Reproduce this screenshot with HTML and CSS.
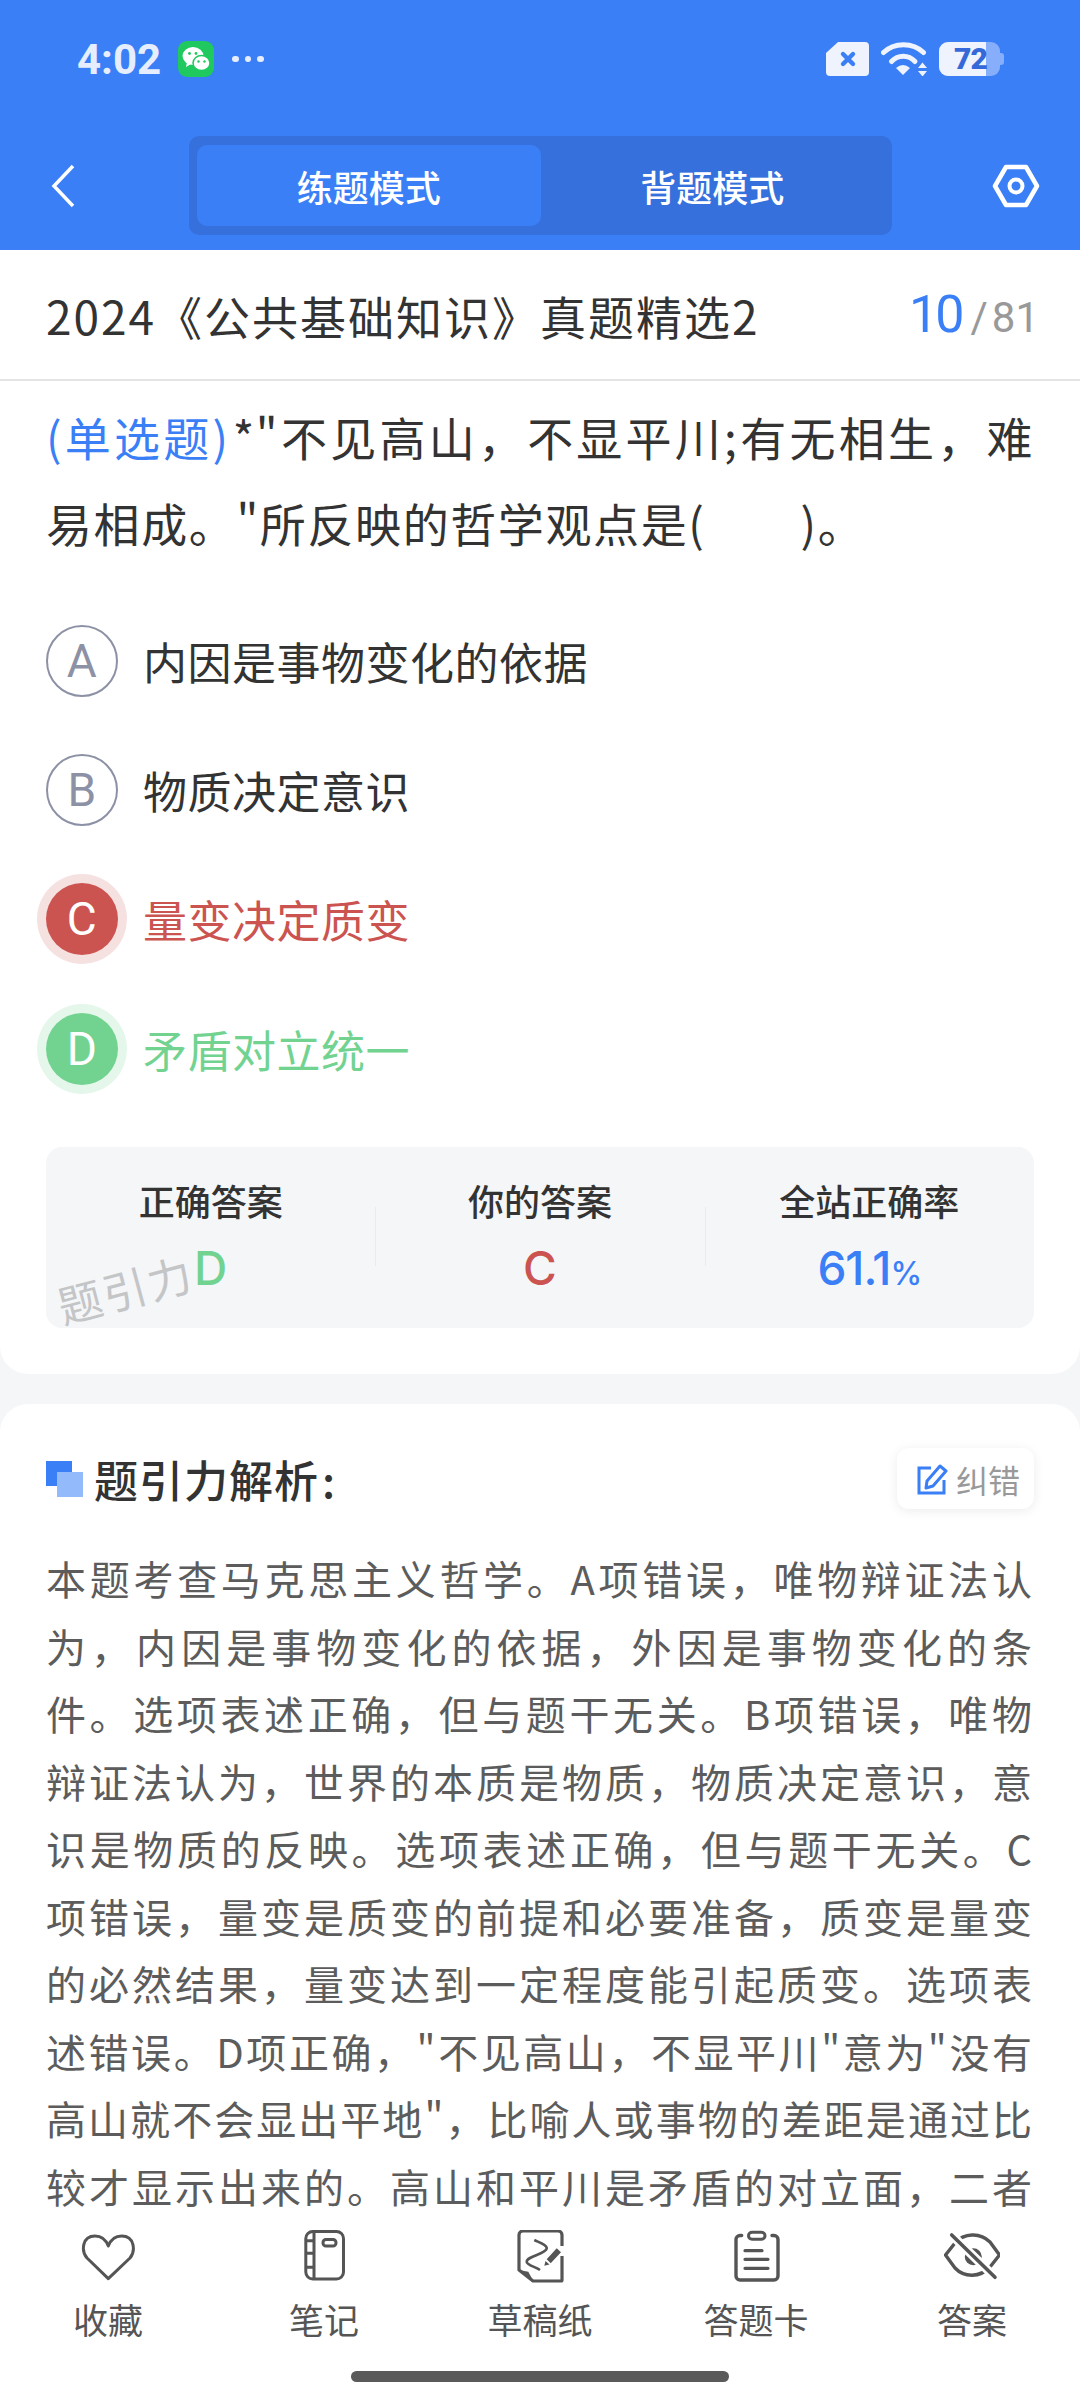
FILE: index.html
```html
<!DOCTYPE html>
<html lang="zh-CN">
<head>
  <meta charset="UTF-8" />
  <title>题引力</title>
  <link rel="stylesheet" href="styles.css">
</head>
<body>
  <div class="phone">
    <header class="top">
      <div class="status">
        <div class="status-left">
          <span class="clock">4:02</span>
          <span class="wechat">
            <svg viewBox="0 0 36 36" width="36" height="36">
              <ellipse cx="15" cy="15" rx="10.500" ry="9" fill="#fff"/>
              <path d="M9 21l-1 5 5-3z" fill="#fff"/>
              <ellipse cx="23.500" cy="22" rx="8.500" ry="7.500" fill="#fff" stroke="#1fc95f" stroke-width="1.500"/>
              <circle cx="11.500" cy="12.500" r="1.400" fill="#1fc95f"/>
              <circle cx="18" cy="12.500" r="1.400" fill="#1fc95f"/>
              <circle cx="20.500" cy="20.500" r="1.200" fill="#1fc95f"/>
              <circle cx="26.500" cy="20.500" r="1.200" fill="#1fc95f"/>
            </svg>
          </span>
          <span class="dots"><i></i><i></i><i></i></span>
        </div>
        <div class="status-right">
          <svg class="sim" viewBox="0 0 43 34" width="43" height="34">
            <path d="M12 0h27a4 4 0 0 1 4 4v26a4 4 0 0 1-4 4H4a4 4 0 0 1-4-4V11z" fill="#eef3fe"/>
            <path d="M17 12l10 10M27 12L17 22" stroke="#3b7ff6" stroke-width="4.400" stroke-linecap="round"/>
          </svg>
          <svg class="wifi" viewBox="0 0 46 34" width="46" height="34">
            <path d="M2.500 10.500C13 0 32 0 42.500 10.500" fill="none" stroke="#eef3fe" stroke-width="5" stroke-linecap="round"/>
            <path d="M10.500 19.500C17 12.500 27.500 12.500 34 19.500" fill="none" stroke="#eef3fe" stroke-width="5" stroke-linecap="round"/>
            <path d="M15 26q7-6 14 0l-7 7z" fill="#eef3fe"/>
            <path d="M41.500 20.500l4.500 5.500h-9zM41.500 34.500L37 29h9z" fill="#eef3fe"/>
          </svg>
          <span class="battery">
            <span class="battery-fill"></span>
            <span class="battery-num">72</span>
            <span class="battery-cap"></span>
          </span>
        </div>
      </div>
      <nav class="navbar">
        <svg class="back" viewBox="0 0 26 44" width="26" height="44">
          <path d="M23 2L4 22l19 20" fill="none" stroke="#fff" stroke-width="3.500"/>
        </svg>
        <div class="mode-tabs">
          <div class="mode-tab active">练题模式</div>
          <div class="mode-tab">背题模式</div>
        </div>
        <svg class="setting" viewBox="0 0 48 44" width="48" height="44">
          <path d="M14 3h20l11 19-11 19H14L3 22z" fill="none" stroke="#fff" stroke-width="4.500" stroke-linejoin="round"/>
          <circle cx="24" cy="22" r="6.500" fill="none" stroke="#fff" stroke-width="4"/>
        </svg>
      </nav>
    </header>

    <div class="paper-title">
      <span class="paper-name">2024《公共基础知识》真题精选2</span>
      <span class="paper-count"><b>10</b><em>/</em>81</span>
    </div>

    <section class="card question">
      <p class="stem"><span class="qtype">(单选题)</span>*"不见高山，不显平川;有无相生，难易相成。"所反映的哲学观点是(&emsp;&emsp;)。</p>

      <div class="option"><span class="letter">A</span>内因是事物变化的依据</div>
      <div class="option"><span class="letter">B</span>物质决定意识</div>
      <div class="option wrong"><span class="letter">C</span>量变决定质变</div>
      <div class="option right"><span class="letter">D</span>矛盾对立统一</div>

      <div class="result">
        <div class="result-col">
          <div class="result-label">正确答案</div>
          <div class="result-val green">D</div>
        </div>
        <div class="result-col">
          <div class="result-label">你的答案</div>
          <div class="result-val red">C</div>
        </div>
        <div class="result-col">
          <div class="result-label">全站正确率</div>
          <div class="result-val blue">61.1<small>%</small></div>
        </div>
        <span class="watermark">题引力</span>
      </div>
    </section>

    <section class="card analysis">
      <div class="analysis-head">
        <span class="squares"><i></i><i></i></span>
        <h2>题引力解析 :</h2>
        <span class="report">
          <svg viewBox="0 0 32 32" width="32" height="32">
            <path d="M15 5H3v25h25V17" fill="none" stroke="#3b7ff6" stroke-width="3"/>
            <path d="M24 3l6 5-13 15-7 2 1-7z" fill="none" stroke="#3b7ff6" stroke-width="3" stroke-linejoin="round"/>
          </svg>
          纠错
        </span>
      </div>
      <p class="analysis-text">本题考查马克思主义哲学。A项错误，唯物辩证法认为，内因是事物变化的依据，外因是事物变化的条件。选项表述正确，但与题干无关。B项错误，唯物辩证法认为，世界的本质是物质，物质决定意识，意识是物质的反映。选项表述正确，但与题干无关。C项错误，量变是质变的前提和必要准备，质变是量变的必然结果，量变达到一定程度能引起质变。选项表述错误。D项正确，"不见高山，不显平川"意为"没有高山就不会显出平地"，比喻人或事物的差距是通过比较才显示出来的。高山和平川是矛盾的对立面，二者</p>
    </section>

    <footer class="bottom">
      <div class="tools">
        <div class="tool">
          <svg viewBox="0 0 56 56" width="56" height="56">
            <path d="M28.300 48.700L7 28C1 21 2 6 15 6c6 0 11 4 13.300 10 2.300-6 7.300-10 13.400-10 13 0 14 15 8.300 22z" fill="none" stroke="#555" stroke-width="3" stroke-linejoin="round"/>
          </svg>
          <span>收藏</span>
        </div>
        <div class="tool">
          <svg viewBox="0 0 56 56" width="56" height="56">
            <rect x="9.800" y="1.500" width="37.700" height="47.500" rx="7" fill="none" stroke="#555" stroke-width="3"/>
            <path d="M18 1.500v47.500M9.800 10.700H18M9.800 23.300H18M9.800 37.300H18" fill="none" stroke="#555" stroke-width="3"/>
            <rect x="27" y="9.500" width="13" height="6.500" rx="3" fill="none" stroke="#555" stroke-width="3"/>
          </svg>
          <span>笔记</span>
        </div>
        <div class="tool">
          <svg viewBox="0 0 56 56" width="56" height="56">
            <path d="M50 26V50a1 1 0 0 1-1 1H21L7 40V5a4 4 0 0 1 4-4h35a4 4 0 0 1 4 4v11" fill="none" stroke="#555" stroke-width="3.200" stroke-linejoin="round"/>
            <path d="M7 40l9.300 1.700L21.300 51z" fill="#555"/>
            <path d="M22.300 10c5 2.500 13 5 12.400 8.500C34 24 15 26 14.700 31.700 14.500 35 24 37 28 40" fill="none" stroke="#555" stroke-width="2.600"/>
            <path d="M34.700 29.300l10-11 4.300 4-10.300 11zM33.500 31l4 3.500-5.200 1.200z" fill="#555"/>
          </svg>
          <span>草稿纸</span>
        </div>
        <div class="tool">
          <svg viewBox="0 0 56 56" width="56" height="56">
            <path d="M13.700 5.500H12a4 4 0 0 0-4 4V46a4 4 0 0 0 4 4H46a4 4 0 0 0 4-4V9.500a4 4 0 0 0-4-4h-2" fill="none" stroke="#555" stroke-width="3.400" stroke-linecap="round"/>
            <rect x="20.500" y="2.200" width="16.500" height="7" rx="3.500" fill="none" stroke="#555" stroke-width="3"/>
            <path d="M17 20.700h17M17 29.300h23M17 38.300h23" stroke="#555" stroke-width="3.200" stroke-linecap="round"/>
          </svg>
          <span>答题卡</span>
        </div>
        <div class="tool">
          <svg viewBox="0 0 56 56" width="56" height="56">
            <path d="M1.500 25L11 13C20 3 36 2 46 12L55.500 25 46 37C36 48 20 47.500 11 38z" fill="none" stroke="#555" stroke-width="3.400" stroke-linejoin="round"/>
            <circle cx="29.300" cy="26.700" r="8.500" fill="#555"/>
            <path d="M7.700 5L51 47.300" stroke="#fff" stroke-width="9"/>
            <path d="M7.700 5L51 47.300" stroke="#555" stroke-width="3.600" stroke-linecap="round"/>
          </svg>
          <span>答案</span>
        </div>
      </div>
      <div class="home-bar"></div>
    </footer>
  </div>
</body>
</html>
```

FILE: styles.css
```css
html, body {
  margin: 0;
  padding: 0;
  background-color: #f5f6f8;
  font-family: "Noto Sans CJK SC", "Noto Sans", sans-serif;
  color: #333;
}

.phone {
  position: relative;
  width: 1080px;
  height: 2400px;
  overflow: hidden;
  background-color: #f5f6f8;
}

.top {
  height: 250px;
  background-color: #3b7ff6;
}

.status {
  height: 118px;
  padding: 0 76px 0 77px;
  display: flex;
  justify-content: space-between;
  align-items: center;
  box-sizing: border-box;
}

.status-left {
  display: flex;
  align-items: center;
}

.clock {
  font-family: Roboto, sans-serif;
  font-size: 42px;
  font-weight: 700;
  color: #e6eefd;
}

.wechat {
  width: 36px;
  height: 36px;
  margin-left: 17px;
  border-radius: 9px;
  background-color: #1fc95f;
  display: flex;
}

.dots {
  display: flex;
  gap: 6px;
  margin-left: 18px;
}

.dots i {
  width: 6.500px;
  height: 6.500px;
  border-radius: 50%;
  background-color: #e6eefd;
}

.status-right {
  display: flex;
  align-items: center;
  gap: 12px;
}

.battery {
  position: relative;
  display: block;
  width: 61px;
  height: 34px;
  margin-right: 4px;
  border-radius: 9px;
  background-color: #86aefa;
}

.battery-fill {
  position: absolute;
  left: 0;
  top: 0;
  bottom: 0;
  width: 47px;
  border-radius: 9px 0 0 9px;
  background-color: #eef3fe;
}

.battery-num {
  position: absolute;
  left: 15px;
  top: 0;
  font-family: Roboto, sans-serif;
  font-size: 30px;
  line-height: 34px;
  font-weight: 900;
  letter-spacing: -1px;
  color: #3568d8;
}

.battery-cap {
  position: absolute;
  right: -4px;
  top: 11px;
  width: 4px;
  height: 12px;
  border-radius: 0 3px 3px 0;
  background-color: #86aefa;
}

.navbar {
  height: 132px;
  padding: 3px 40px 0 50px;
  box-sizing: border-box;
  display: flex;
  align-items: center;
  justify-content: space-between;
}

.mode-tabs {
  width: 703px;
  height: 99px;
  margin-left: 13px;
  padding: 9px 8px;
  box-sizing: border-box;
  display: flex;
  background-color: #3670dc;
  border-radius: 10px;
}

.mode-tab {
  flex: 1;
  display: flex;
  align-items: center;
  justify-content: center;
  font-size: 36px;
  font-weight: 500;
  color: #fff;
  border-radius: 10px;
}

.mode-tab.active {
  background-color: #3b7ff6;
}

.paper-title {
  height: 131px;
  padding: 0 41px 0 46px;
  display: flex;
  align-items: center;
  justify-content: space-between;
  background-color: #fff;
  border-bottom: 2px solid #e4e4e4;
  box-sizing: border-box;
}

.paper-name {
  font-size: 46px;
  letter-spacing: 2px;
}

.paper-count {
  font-family: Roboto, sans-serif;
  font-size: 42px;
  color: #999;
}

.paper-count b {
  font-size: 52px;
  font-weight: 400;
  letter-spacing: -3px;
  color: #3b7ff6;
}

.paper-count em {
  font-style: normal;
  margin: 0 4px 0 9px;
}

.card {
  background-color: #fff;
  padding: 0 46px;
}

.question {
  height: 993px;
  border-radius: 0 0 28px 28px;
  padding-top: 13px;
  box-sizing: border-box;
}

.stem {
  margin: 0 0 31px;
  font-size: 46px;
  line-height: 85.500px;
  letter-spacing: 1.600px;
  text-align: justify;
}

.qtype {
  margin-right: 3px;
  color: #3b7ff6;
}

.option {
  height: 129.300px;
  display: flex;
  align-items: center;
  font-size: 44px;
  letter-spacing: 0.500px;
}

.letter {
  width: 72px;
  height: 72px;
  margin-right: 25px;
  flex: none;
  display: flex;
  align-items: center;
  justify-content: center;
  box-sizing: border-box;
  border: 2px solid #8d91a5;
  border-radius: 50%;
  font-family: Roboto, sans-serif;
  font-size: 46px;
  color: #8d91a5;
}

.wrong {
  color: #cb5450;
}

.wrong .letter {
  border: none;
  background-color: #cb5450;
  color: #fff;
  box-shadow: 0 0 0 9px #f6e1e1;
}

.right {
  color: #72d391;
}

.right .letter {
  border: none;
  background-color: #72d391;
  color: #fff;
  box-shadow: 0 0 0 9px #e5f7eb;
}

.result {
  position: relative;
  height: 181px;
  margin-top: 34px;
  display: flex;
  background-color: #f5f6f8;
  border-radius: 16px;
}

.result-col {
  flex: 1;
  padding-top: 28px;
  text-align: center;
  position: relative;
}

.result-col + .result-col:before {
  content: "";
  position: absolute;
  left: 0;
  top: 60px;
  height: 59px;
  width: 1px;
  background-color: #eaebee;
}

.result-label {
  font-size: 36px;
  font-weight: 500;
  line-height: 50px;
}

.result-val {
  margin-top: 15px;
  font-family: Inter, sans-serif;
  font-size: 46px;
  line-height: 56px;
  font-weight: 500;
}

.blue {
  letter-spacing: -1px;
  color: #3b7ff6;
}

.result-val small {
  font-size: 32px;
}

.green {
  color: #72d391;
}

.red {
  color: #cb5450;
}

.watermark {
  position: absolute;
  left: 10px;
  bottom: 8px;
  font-size: 44px;
  letter-spacing: 2px;
  color: #c4c5c7;
  transform: rotate(-15deg);
}

.analysis {
  height: 900px;
  margin-top: 30px;
  border-radius: 28px;
}

.analysis-head {
  height: 61px;
  padding-top: 44px;
  display: flex;
  align-items: center;
}

.squares {
  position: relative;
  width: 37px;
  height: 36px;
  margin-right: 11px;
  display: block;
}

.squares i {
  position: absolute;
  width: 26px;
  height: 25px;
}

.squares i:first-child {
  left: 0;
  top: 0;
  background-color: #3b7ff6;
}

.squares i:last-child {
  right: 0;
  bottom: 0;
  background-color: #93bbfb;
}

.analysis-head h2 {
  margin: 0;
  flex: 1;
  font-size: 44px;
  font-weight: 500;
  letter-spacing: 1px;
  word-spacing: -8px;
}

.report {
  height: 61px;
  width: 137px;
  padding-left: 5px;
  box-sizing: border-box;
  display: flex;
  align-items: center;
  justify-content: center;
  gap: 8px;
  font-size: 32px;
  color: #999;
  border-radius: 12px;
  box-shadow: 0 2px 12px rgba(0, 0, 0, 0.08);
}

.analysis-text {
  margin: 36px 0 0;
  font-size: 40px;
  line-height: 67.500px;
  letter-spacing: 2px;
  color: #5c5c5c;
  text-align: justify;
  text-align-last: justify;
}

.bottom {
  position: absolute;
  left: 0;
  right: 0;
  bottom: 0;
  height: 192px;
  background-color: #fff;
}

.tools {
  display: flex;
  padding: 22px 0 0 0;
}

.tool {
  flex: 1;
  display: flex;
  flex-direction: column;
  align-items: center;
  font-size: 35px;
  color: #555;
}

.tool span {
  margin-top: 8px;
  line-height: 50px;
}

.home-bar {
  position: absolute;
  left: 351px;
  bottom: 18px;
  width: 378px;
  height: 11px;
  border-radius: 6px;
  background-color: #5a5a5a;
}
```
